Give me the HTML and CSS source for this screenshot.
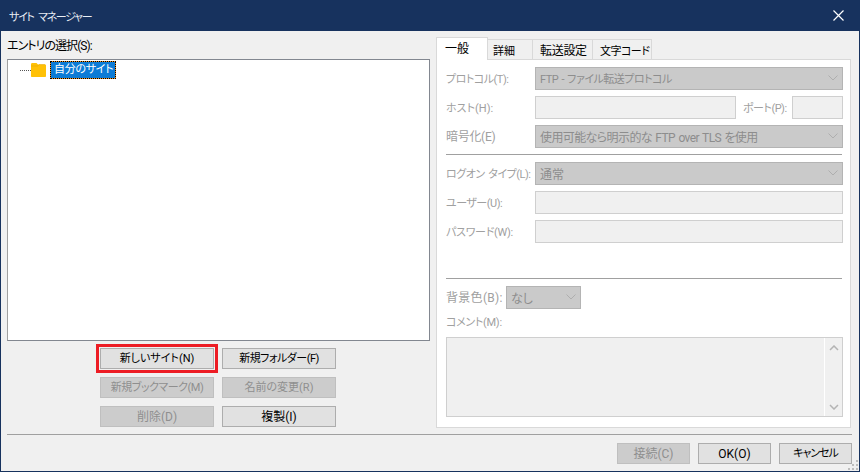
FILE: index.html
```html
<!DOCTYPE html>
<html lang="ja">
<head>
<meta charset="utf-8">
<title>サイト マネージャー</title>
<link rel="stylesheet" href="styles.css">
</head>
<body>
<div class="window">
  <header class="titlebar">
    <span class="title k3">サイト マネージャー</span>
    <svg class="close" width="11" height="11" viewBox="0 0 11 11"><path d="M.5.5l10 10M10.5.5l-10 10" stroke="#fff" stroke-width="1.2" fill="none"/></svg>
  </header>
  <main class="main">
    <section class="left">
      <div class="entry-label t3">エントリの選択(S):</div>
      <div class="tree">
        <div class="tree-row">
          <span class="tree-dots"></span>
          <svg class="folder" width="15" height="14" viewBox="0 0 15 14"><path d="M0 1.5C0 .7.5 0 1.2 0h4.3l1.5 1.6h7c.6 0 1 .4 1 1V13c0 .6-.4 1-1 1H1c-.6 0-1-.4-1-1z" fill="#ffc107"/><path d="M0 3h7l1-1.4h6" fill="none" stroke="#e5a800" stroke-width=".6"/></svg>
          <span class="tree-sel k1">自分のサイト</span>
        </div>
      </div>
      <div class="left-buttons">
        <div class="btn btn-hl k0">新しいサイト(N)</div>
        <div class="btn k2">新規フォルダー(F)</div>
        <div class="btn btn-off k2">新規ブックマーク(M)</div>
        <div class="btn btn-off k0">名前の変更(R)</div>
        <div class="btn btn-off">削除(D)</div>
        <div class="btn">複製(I)</div>
      </div>
    </section>
    <section class="right">
      <nav class="tabs">
        <div class="tab tab-on">一般</div>
        <div class="tab tab-b k0">詳細</div>
        <div class="tab tab-c t1">転送設定</div>
        <div class="tab tab-d k2">文字コード</div>
      </nav>
      <div class="panel">
        <div class="row">
          <label class="lbl k2">プロトコル(T):</label>
          <div class="sel grow"><span class="k2">FTP - ファイル転送プロトコル</span><svg class="chev" width="10" height="6" viewBox="0 0 10 6"><path d="M.5.5L5 5 9.5.5" fill="none" stroke="#aeaeae"/></svg></div>
        </div>
        <div class="row">
          <label class="lbl k0">ホスト(H):</label>
          <div class="inp host"></div>
          <label class="lbl-port k2">ポート(P):</label>
          <div class="inp port"></div>
        </div>
        <div class="row">
          <label class="lbl t1">暗号化(E)</label>
          <div class="sel grow"><span class="t2">使用可能なら明示的な FTP over TLS を使用</span><svg class="chev" width="10" height="6" viewBox="0 0 10 6"><path d="M.5.5L5 5 9.5.5" fill="none" stroke="#aeaeae"/></svg></div>
        </div>
        <hr class="sep sep-a">
        <div class="row">
          <label class="lbl k2 spaced">ログオン タイプ(L):</label>
          <div class="sel grow"><span>通常</span><svg class="chev" width="10" height="6" viewBox="0 0 10 6"><path d="M.5.5L5 5 9.5.5" fill="none" stroke="#aeaeae"/></svg></div>
        </div>
        <div class="row">
          <label class="lbl k2">ユーザー(U):</label>
          <div class="inp grow"></div>
        </div>
        <div class="row">
          <label class="lbl k1">パスワード(W):</label>
          <div class="inp grow"></div>
        </div>
        <hr class="sep sep-b">
        <div class="row">
          <label class="lbl lbl-bg wide">背景色(B):</label>
          <div class="sel sel-bg"><span>なし</span><svg class="chev" width="10" height="6" viewBox="0 0 10 6"><path d="M.5.5L5 5 9.5.5" fill="none" stroke="#aeaeae"/></svg></div>
        </div>
        <label class="lbl lbl-comment k1">コメント(M):</label>
        <div class="memo">
          <div class="scroll">
            <svg width="10" height="6" viewBox="0 0 10 6"><path d="M1 5l4-4 4 4" fill="none" stroke="#b4b4b4" stroke-width="1.5"/></svg>
            <svg width="10" height="6" viewBox="0 0 10 6"><path d="M1 1l4 4 4-4" fill="none" stroke="#b4b4b4" stroke-width="1.5"/></svg>
          </div>
        </div>
      </div>
    </section>
  </main>
  <hr class="footer-sep">
  <footer class="footer">
    <div class="btn btn-off btn-foot">接続(C)</div>
    <div class="btn btn-foot">OK(O)</div>
    <div class="btn btn-foot k3">キャンセル</div>
  </footer>
  <svg class="grip" width="11" height="11" viewBox="0 0 11 11"><path d="M8 0h2v2H8zM4 4h2v2H4zM8 4h2v2H8zM0 8h2v2H0zM4 8h2v2H4zM8 8h2v2H8z" fill="#bdbdbd"/></svg>
</div>
</body>
</html>
```

FILE: styles.css
```css
* { box-sizing: border-box; }
html, body { margin: 0; padding: 0; }
body {
  width: 860px;
  height: 472px;
  overflow: hidden;
  font-family: Roboto, "Noto Sans CJK JP", "Noto Sans", sans-serif;
  font-size: 12px;
  font-feature-settings: "palt";
  color: #000;
}
/* 12px strings with tightened tracking */
.wide { letter-spacing: 0.3px; }
.t1 { letter-spacing: -0.3px; }
.t2 { letter-spacing: -0.6px; }
.t3 { letter-spacing: -0.95px; }
.k0 { font-size: 11px; }
.k1 { font-size: 11px; letter-spacing: -0.3px; }
.k2 { font-size: 11px; letter-spacing: -0.5px; }
.k3 { font-size: 11px; letter-spacing: -1px; }
.spaced { word-spacing: 1.5px; }
.window {
  position: relative;
  width: 860px;
  height: 472px;
  display: flex;
  flex-direction: column;
  background: #f0f0f0;
  border-style: solid;
  border-color: #17325e;
  border-width: 0 1px 1px 1px;
}
.titlebar {
  height: 31px;
  flex: none;
  margin: 0 -1px;
  padding: 0 16px 0 9px;
  background: #17325e;
  color: #e8edf4;
  display: flex;
  align-items: center;
  justify-content: space-between;
}
.title { word-spacing: 3px; letter-spacing: -1.3px; }
.close { display: block; }
.main {
  flex: none;
  height: 403px;
  display: flex;
  gap: 6px;
  padding-left: 6px;
}
.left { width: 423px; flex: none; }
.entry-label {
  height: 28px;
  padding-top: 7px;
  line-height: 16px;
}
.tree {
  height: 282px;
  background: #fff;
  border: 1px solid #828790;
  border-left-color: #a0a0a0;
  padding: 1px 0 0 12px;
}
.tree-row { display: flex; align-items: center; height: 18px; }
.tree-dots {
  width: 11px;
  height: 0;
  border-top: 1px dotted #555;
}
.folder { margin-right: 4px; display: block; }
.tree-sel {
  height: 18px;
  line-height: 16px;
  padding: 0 2px 0 3px;
  color: #fff;
  border: 1px dotted #000;
  background: linear-gradient(#0c7bd6, #0c7bd6) padding-box, linear-gradient(#f09020, #f09020) border-box;
}
.left-buttons {
  margin: 7px 0 0 93px;
  display: grid;
  grid-template-columns: 114px 114px;
  grid-auto-rows: 21px;
  gap: 8px;
}
.btn {
  display: flex;
  align-items: center;
  justify-content: center;
  background: #e1e1e1;
  border: 1px solid #adadad;
  line-height: 1;
  white-space: nowrap;
}
.btn-off {
  background: #cccccc;
  border-color: #bfbfbf;
  color: #8f8f8f;
}
.btn-hl {
  outline: 3px solid #ed1c24;
  outline-offset: 1px;
}
.right { flex: 1; padding: 6px 8px 0 0; }
.tabs {
  display: flex;
  align-items: flex-end;
  height: 23px;
  margin-bottom: -1px;
  position: relative;
  z-index: 1;
}
.tab {
  height: 21px;
  background: #f0f0f0;
  border: 1px solid #d9d9d9;
  border-left: 0;
  display: flex;
  align-items: center;
}
.tab-on {
  width: 52px;
  height: 23px;
  background: #fff;
  border-left: 1px solid #d9d9d9;
  border-bottom: 0;
  padding: 0 0 3px 8px;
}
.tab-b { width: 45px; padding-left: 5px; }
.tab-c { width: 60px; padding-left: 7px; }
.tab-d { width: 59px; padding-left: 7px; }
.panel {
  height: 369px;
  background: #fff;
  border: 1px solid #d9d9d9;
  padding: 7px 7px 0 9px;
  display: flex;
  flex-direction: column;
  color: #a0a0a0;
}
.row {
  display: flex;
  align-items: center;
  height: 23px;
  flex: none;
  margin-bottom: 6px;
}
.lbl { width: 89px; flex: none; white-space: nowrap; padding-bottom: 2px; }
.lbl-bg { width: 60px; }
.lbl-port { width: 56px; padding: 0 0 2px 7px; flex: none; white-space: nowrap; }
.grow { flex: 1; }
.sel {
  height: 23px;
  display: flex;
  align-items: center;
  justify-content: space-between;
  background: #cacaca;
  border: 1px solid #b4b4b4;
  padding: 0 4px 1px 4px;
  color: #8d8d8d;
  word-spacing: 1px;
}
.sel-bg { width: 75px; flex: none; }
.chev { display: block; }
.inp {
  height: 23px;
  background: #f0f0f0;
  border: 1px solid #cfcfcf;
}
.host { width: 201px; flex: none; }
.port { width: 51px; flex: none; }
.sep {
  flex: none;
  margin: 0;
  height: 1px;
  border: 0;
  background: #a0a0a0;
  width: 396px;
}
.sep-a { margin-bottom: 7px; }
.sep-b { margin-top: 29px; margin-bottom: 7px; }
.lbl-comment { height: 16px; line-height: 16px; margin-bottom: 6px; width: auto; padding-bottom: 0; }
.memo {
  height: 80px;
  flex: none;
  background: #f0f0f0;
  border: 1px solid #cfcfcf;
  display: flex;
  justify-content: flex-end;
}
.scroll {
  width: 18px;
  border-left: 1px solid #fff;
  display: flex;
  flex-direction: column;
  justify-content: space-between;
  align-items: center;
  padding: 7px 0 6px;
}
.scroll svg { display: block; }
.footer-sep {
  flex: none;
  margin: 0 7px 0 6px;
  height: 1px;
  border: 0;
  background: #a0a0a0;
}
.footer {
  flex: none;
  display: flex;
  justify-content: flex-end;
  gap: 8px;
  padding: 8px 7px 0 0;
}
.btn-foot { width: 73px; height: 21px; }
.grip { position: absolute; right: 0; bottom: 0; }
```
